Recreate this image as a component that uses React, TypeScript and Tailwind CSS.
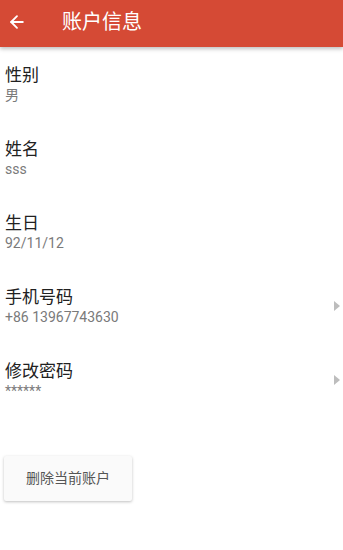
import { ArrowLeft } from 'lucide-react'

interface Row {
  label: string
  value: string
  arrow?: boolean
}

const rows: Row[] = [
  { label: '性别', value: '男' },
  { label: '姓名', value: 'sss' },
  { label: '生日', value: '92/11/12' },
  { label: '手机号码', value: '+86 13967743630', arrow: true },
  { label: '修改密码', value: '******', arrow: true },
]

const font = { fontFamily: 'Roboto, "Noto Sans CJK SC", sans-serif' }

export default function App() {
  return (
    <div className="w-[343px] h-[550px] bg-white overflow-hidden" style={font}>
      <div className="h-[47px] bg-[#d54a35] flex items-center shadow-[0_2px_4px_rgba(0,0,0,0.25)] relative z-10">
        <ArrowLeft className="ml-[7px] mb-[4px] text-white" size={20} strokeWidth={2.2} />
        <span className="ml-[35px] mb-[3px] text-white text-[20px] leading-none">账户信息</span>
      </div>
      <div className="pt-[18px]">
        {rows.map((r) => (
          <div key={r.label} className="h-[74px] pl-[5px] pr-[3px] flex items-start">
            <div className="flex-1">
              <div className="text-[17px] leading-[20px] text-[#212121]">{r.label}</div>
              <div className="text-[14px] leading-[16px] mt-[2px] text-[#7a7a7a]">{r.value}</div>
            </div>
            {r.arrow && (
              <div className="mt-[14px] w-0 h-0 border-y-[5px] border-y-transparent border-l-[6px] border-l-[#bdbdbd]" />
            )}
          </div>
        ))}
      </div>
      <div className="pl-[4px] mt-[21px]">
        <button className="w-[128px] h-[45px] bg-[#fafafa] rounded-[2px] shadow-[0_1px_3px_rgba(0,0,0,0.25)] text-[14px] text-[#555]">
          删除当前账户
        </button>
      </div>
    </div>
  )
}
